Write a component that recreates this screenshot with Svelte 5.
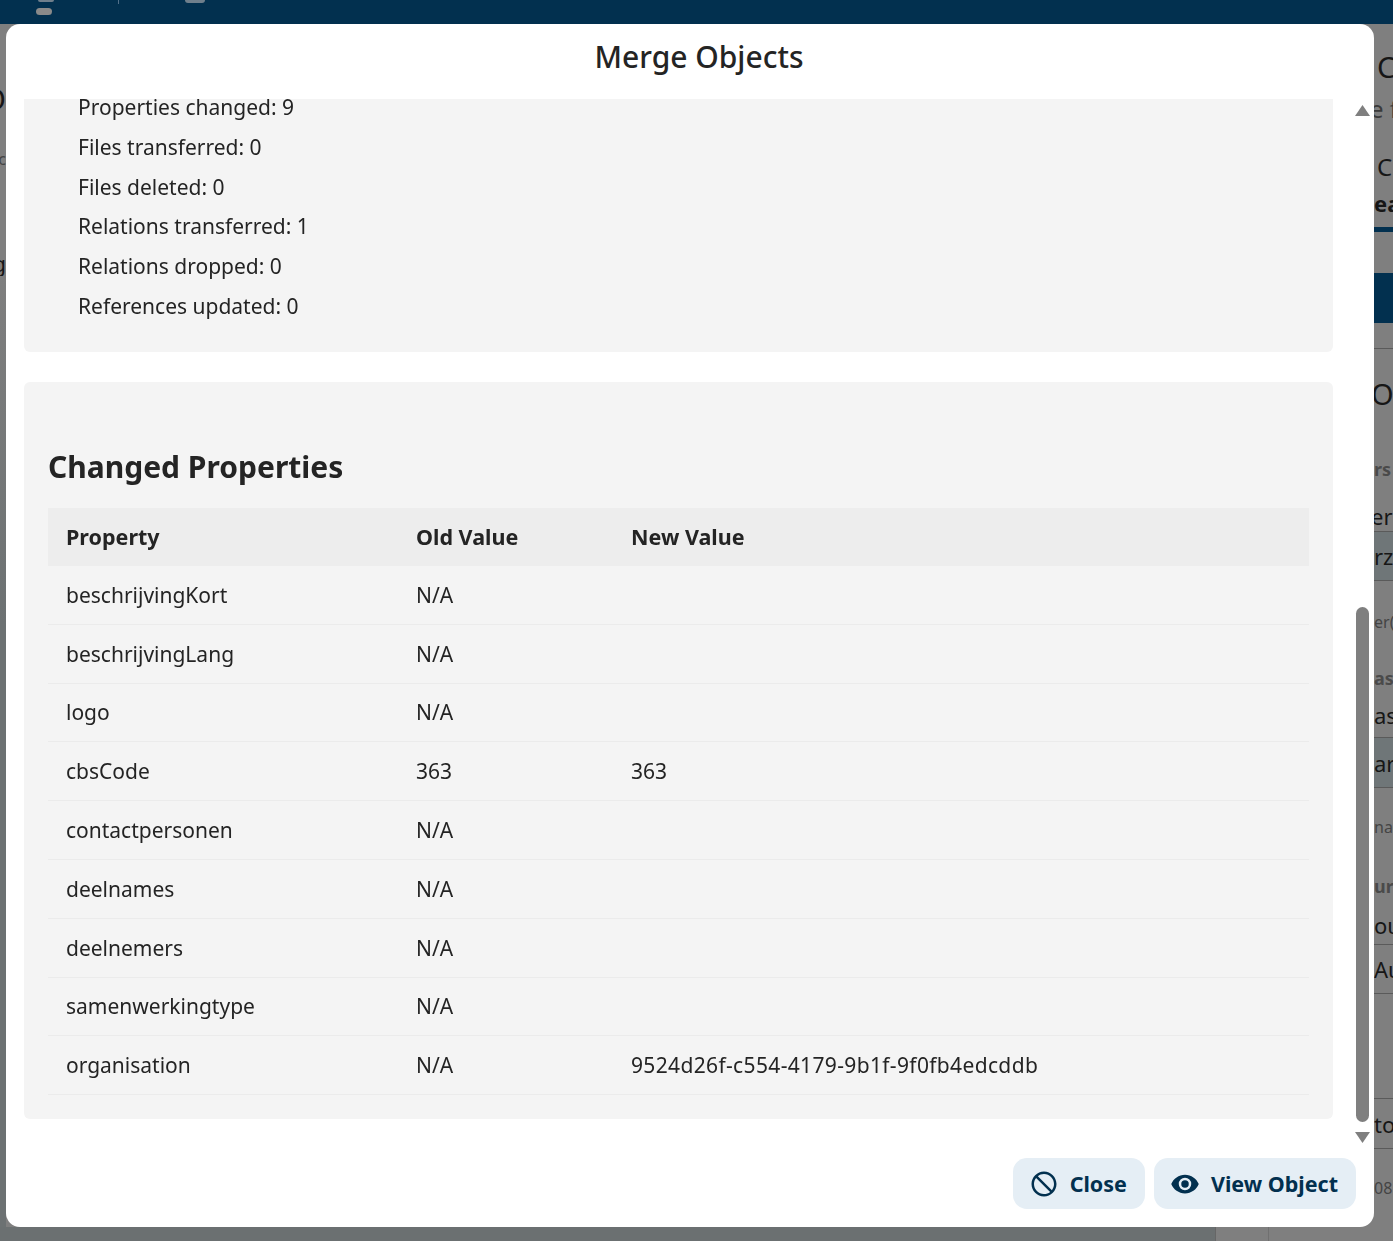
<script lang="ts">
	const summary = [
		'Properties changed: 9',
		'Files transferred: 0',
		'Files deleted: 0',
		'Relations transferred: 1',
		'Relations dropped: 0',
		'References updated: 0'
	];

	const changes = [
		{ property: 'beschrijvingKort', oldValue: 'N/A', newValue: '' },
		{ property: 'beschrijvingLang', oldValue: 'N/A', newValue: '' },
		{ property: 'logo', oldValue: 'N/A', newValue: '' },
		{ property: 'cbsCode', oldValue: '363', newValue: '363' },
		{ property: 'contactpersonen', oldValue: 'N/A', newValue: '' },
		{ property: 'deelnames', oldValue: 'N/A', newValue: '' },
		{ property: 'deelnemers', oldValue: 'N/A', newValue: '' },
		{ property: 'samenwerkingtype', oldValue: 'N/A', newValue: '' },
		{ property: 'organisation', oldValue: 'N/A', newValue: '9524d26f-c554-4179-9b1f-9f0fb4edcddb' }
	];

	// what shows of the page behind the modal, in the strip right of it
	const rows = [
		{ text: 'C', cls: 'big inset', h: 36 },
		{ text: 'e f', cls: 'small', h: 48 },
		{ text: '', cls: '', h: 16 },
		{ text: 'C', cls: 'mid inset', h: 36 },
		{ text: '', cls: '', h: 7 },
		{ text: 'ea', cls: 'tab', h: 24 },
		{ text: '', cls: '', h: 12 },
		{ text: '', cls: 'navy', h: 5 },
		{ text: '', cls: '', h: 41 },
		{ text: '', cls: 'navy', h: 50 },
		{ text: '', cls: 'line', h: 26 },
		{ text: 'Ol', cls: 'big pull', h: 88 },
		{ text: 'rs', cls: 'label', h: 64 },
		{ text: 'ers', cls: 'cell line pull', h: 31 },
		{ text: 'rz', cls: 'cell line shade', h: 49 },
		{ text: 'er(', cls: 'note', h: 82 },
		{ text: 'as', cls: 'label', h: 30 },
		{ text: 'as', cls: 'cell line', h: 45 },
		{ text: 'ar', cls: 'cell line shade', h: 50 },
		{ text: 'na(', cls: 'note', h: 78 },
		{ text: 'ur', cls: 'label', h: 40 },
		{ text: 'ou', cls: 'cell line', h: 39 },
		{ text: 'Au', cls: 'cell line', h: 49 },
		{ text: '', cls: 'line', h: 105 },
		{ text: 'to', cls: 'cell line', h: 50 },
		{ text: '08', cls: 'note', h: 78 }
	];

	const leftRows = [
		{ text: 'O', cls: 'big', h: 36, top: 56 },
		{ text: 'c', cls: 'note', h: 26, top: 30 },
		{ text: 'g', cls: 'cell', h: 26, top: 78 }
	];
</script>

<div class="page">
	<div class="topbar">
		<div class="nav-item">
			<span class="nav-cut wide"></span>
			<span class="nav-pill"></span>
		</div>
		<span class="nav-tick"></span>
		<span class="nav-cut square"></span>
	</div>

	<div class="middle">
		<div class="left-strip">
			{#each leftRows as r}
				<div class="bg-row end {r.cls}" style="height: {r.h}px; margin-top: {r.top}px">{r.text}</div>
			{/each}
		</div>
		<div class="right-strip">
			{#each rows as r}
				<div class="bg-row {r.cls}" style="height: {r.h}px">{r.text}</div>
			{/each}
		</div>
	</div>

	<div class="bottom-band">
		<div class="band-main"></div>
		<div class="band-cell"></div>
	</div>
</div>

<div class="modal">
	<h1>Merge Objects</h1>

	<div class="body">
		<div class="body-inner">
			<section class="card summary">
				<ul>
					{#each summary as line}
						<li>{line}</li>
					{/each}
				</ul>
			</section>

			<section class="card">
				<h2>Changed Properties</h2>
				<table>
					<thead>
						<tr>
							<th class="col-prop">Property</th>
							<th class="col-old">Old Value</th>
							<th>New Value</th>
						</tr>
					</thead>
					<tbody>
						{#each changes as row}
							<tr>
								<td>{row.property}</td>
								<td>{row.oldValue}</td>
								<td class:uuid={row.newValue.length > 20}>{row.newValue}</td>
							</tr>
						{/each}
					</tbody>
				</table>
			</section>
		</div>

		<div class="scrollbar" aria-hidden="true">
			<svg class="arrow" viewBox="0 0 15 11" width="15" height="11"><path d="M7.500 0 L15 11 H0 Z" /></svg>
			<div class="track"><div class="thumb"></div></div>
			<svg class="arrow" viewBox="0 0 15 11" width="15" height="11"><path d="M0 0 H15 L7.500 11 Z" /></svg>
		</div>
	</div>

	<div class="actions">
		<button>
			<svg viewBox="0 0 24 24" width="30" height="30"><path d="M12 2C17.500 2 22 6.500 22 12S17.500 22 12 22 2 17.500 2 12 6.500 2 12 2M12 4C10.100 4 8.400 4.600 7.100 5.700L18.300 16.900C19.300 15.500 20 13.800 20 12C20 7.600 16.400 4 12 4M16.900 18.300L5.700 7.100C4.600 8.400 4 10.100 4 12C4 16.400 7.600 20 12 20C13.900 20 15.600 19.400 16.900 18.300Z" /></svg>
			<span>Close</span>
		</button>
		<button>
			<svg viewBox="0 0 24 24" width="30" height="30"><path d="M12 9A3 3 0 0 0 9 12A3 3 0 0 0 12 15A3 3 0 0 0 15 12A3 3 0 0 0 12 9M12 17A5 5 0 0 1 7 12A5 5 0 0 1 12 7A5 5 0 0 1 17 12A5 5 0 0 1 12 17M12 4.500C7 4.500 2.730 7.610 1 12C2.730 16.390 7 19.500 12 19.500C17 19.500 21.270 16.390 23 12C21.270 7.610 17 4.500 12 4.500Z" /></svg>
			<span>View Object</span>
		</button>
	</div>
</div>

<style>
	:global(body) {
		margin: 0;
		background: #7f7f7f;
		overflow: hidden;
		font-family: 'Noto Sans', 'Open Sans', sans-serif;
	}

	.page {
		height: 1241px;
		overflow: hidden;
		display: flex;
		flex-direction: column;
		color: #161616;
	}

	.topbar {
		height: 24px;
		flex: none;
		background: #02304f;
		display: flex;
		align-items: flex-start;
		padding-left: 36px;
	}

	.nav-item {
		display: flex;
		flex-direction: column;
		gap: 6px;
		width: 82px;
	}

	.nav-cut {
		display: block;
		background: #6f7f8c;
		border-radius: 0 0 3px 3px;
	}

	.nav-cut.wide {
		width: 16px;
		height: 2px;
		margin-left: 2px;
	}

	.nav-cut.square {
		width: 20px;
		height: 3px;
		margin-left: 66px;
	}

	.nav-pill {
		display: block;
		width: 16px;
		height: 7px;
		background: #8a8a8a;
		border-radius: 4px;
	}

	.nav-tick {
		width: 1px;
		height: 4px;
		background: #52708a;
	}

	.middle {
		flex: none;
		height: 1203px;
		display: flex;
		justify-content: space-between;
		overflow: hidden;
	}

	.left-strip {
		width: 6px;
		flex: none;
		overflow: hidden;
		background: linear-gradient(#7f7f7f 20%, #6c7172 50%);
	}

	.right-strip {
		width: 19px;
		flex: none;
		overflow: hidden;
		padding-top: 24px;
		font-size: 24px;
	}

	.bg-row {
		white-space: nowrap;
		overflow: hidden;
		display: flex;
		align-items: center;
		box-sizing: border-box;
	}

	.bg-row.end {
		justify-content: flex-end;
	}

	.bg-row.big {
		font-size: 29px;
	}

	.bg-row.inset {
		padding-left: 3px;
	}

	.bg-row.pull {
		text-indent: -3px;
	}

	.bg-row.mid {
		font-size: 24px;
	}

	.bg-row.small {
		font-size: 24px;
		color: #3a3a3a;
		text-indent: -4px;
	}

	.bg-row.tab {
		font-size: 22px;
		font-weight: 700;
	}

	.bg-row.navy {
		background: #02304f;
	}

	.bg-row.label {
		font-size: 18px;
		font-weight: 700;
		color: #4a4a4a;
	}

	.bg-row.cell {
		font-size: 22px;
	}

	.bg-row.note {
		font-size: 16px;
		color: #444;
	}

	.bg-row.line {
		border-bottom: 1px solid #5a5a5a;
	}

	.bg-row.shade {
		background: #6f7678;
	}

	.bottom-band {
		flex: 1;
		display: flex;
	}

	.band-main {
		width: 1215px;
		background: #6b7071;
		border-right: 1px solid #666;
	}

	.band-cell {
		width: 52px;
		border-right: 1px solid #707070;
	}

	.modal {
		position: fixed;
		left: 6px;
		top: 24px;
		width: 1368px;
		height: 1203px;
		background: #fff;
		border-radius: 14px;
		display: flex;
		flex-direction: column;
		color: #242424;
	}

	h1 {
		flex: none;
		margin: 0;
		height: 75px;
		box-sizing: border-box;
		padding-left: 18px;
		line-height: 65px;
		text-align: center;
		font-size: 30px;
		font-weight: 500;
	}

	.body {
		flex: none;
		height: 1044px;
		display: flex;
		padding-left: 18px;
		overflow: hidden;
	}

	.body-inner {
		width: 1309px;
		flex: none;
		display: flex;
		flex-direction: column;
		gap: 30px;
	}

	.card {
		background: #f4f4f4;
		border-radius: 6px;
		padding: 0 24px 24px;
	}

	.summary {
		height: 253px;
		border-radius: 0 0 6px 6px;
		padding: 0;
		box-sizing: border-box;
	}

	ul {
		list-style: none;
		margin: 0;
		padding: 0 0 0 54px;
	}

	li {
		height: 39.800px;
		line-height: 16px;
		font-size: 21px;
	}

	h2 {
		margin: 0;
		padding-top: 65px;
		height: 61px;
		line-height: 40px;
		font-size: 30px;
		font-weight: 700;
	}

	table {
		width: 100%;
		border-collapse: collapse;
		table-layout: fixed;
		font-size: 21px;
	}

	th {
		text-align: left;
		height: 58px;
		padding: 0 18px 2px;
		box-sizing: border-box;
		background: #ededed;
		font-weight: 700;
		font-size: 21.500px;
	}

	.col-prop {
		width: 350px;
	}

	.col-old {
		width: 215px;
	}

	td {
		height: 57.800px;
		padding: 0 18px;
		border-bottom: 1px solid #ebebeb;
	}

	td.uuid {
		letter-spacing: 0.35px;
	}

	.scrollbar {
		flex: none;
		margin-left: 22px;
		width: 15px;
		display: flex;
		flex-direction: column;
		align-items: center;
		padding-top: 6px;
		box-sizing: border-box;
	}

	.arrow {
		flex: none;
		fill: #7f7f7f;
	}

	.track {
		flex: none;
		height: 1016px;
		width: 13px;
		display: flex;
		flex-direction: column;
		justify-content: flex-end;
	}

	.thumb {
		height: 515px;
		margin-bottom: 10px;
		background: #7f7f7f;
		border-radius: 7px;
	}

	.actions {
		flex: 1;
		display: flex;
		justify-content: flex-end;
		gap: 9px;
		padding: 15px 18px 0 0;
	}

	button {
		height: 51px;
		display: inline-flex;
		align-items: center;
		gap: 11px;
		padding: 0 18px 0 16px;
		border: none;
		border-radius: 14px;
		background: #e5eef5;
		color: #02304f;
		font: inherit;
		font-size: 21.500px;
		font-weight: 700;
	}

	button span {
		margin-bottom: 1px;
	}

	button svg {
		fill: currentColor;
		flex: none;
	}
</style>
